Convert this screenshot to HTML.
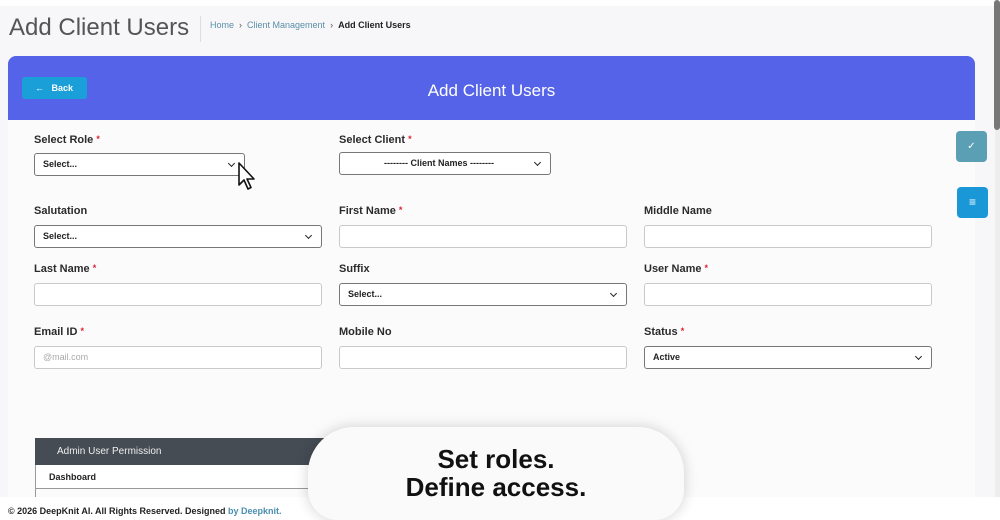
<!DOCTYPE html>
<html style="overflow:hidden;width:1000px;height:520px"><head><meta charset="utf-8">
<style>
*{box-sizing:border-box;margin:0;padding:0}
body{width:1000px;height:520px;overflow:hidden;background:#f7f7f9;font-family:"Liberation Sans",sans-serif;position:relative;color:#222}
.a{position:absolute}
.lbl{position:absolute;font-size:11px;font-weight:bold;color:#2b2b2b}
.lbl i{color:#d23;font-style:normal;font-size:9px;vertical-align:top}
.in{position:absolute;height:23px;border:1px solid #c9c9cc;border-radius:3px;background:#fff;font-size:9px;padding:0 8px;line-height:21px;color:#999}
.sel{border-color:#777;color:#222;font-weight:bold}
.sel:after{content:"";position:absolute;right:10px;top:7px;width:4px;height:4px;border-right:1.5px solid #222;border-bottom:1.5px solid #222;transform:rotate(45deg)}
</style></head><body>
<div class="a" style="left:0;top:0;width:1000px;height:6px;background:#fff"></div>
<div class="a" style="left:9px;top:14px;font-size:24px;color:#555">Add Client Users</div>
<div class="a" style="left:200px;top:16px;width:1px;height:26px;background:#ddd"></div>
<div class="a" style="left:210px;top:20px;font-size:9px;color:#5a8fa8">Home &nbsp;<span style="color:#555">›</span>&nbsp; Client Management &nbsp;<span style="color:#555">›</span>&nbsp; <b style="color:#222">Add Client Users</b></div>
<div class="a" style="left:8px;top:56px;width:967px;height:64px;background:#5463e8;border-radius:8px 8px 0 0"></div>
<div class="a" style="left:22px;top:77px;width:65px;height:22px;background:#1a9fd8;border-radius:3px;color:#fff;font-size:9px;font-weight:bold;line-height:22px;padding-left:13px">←&nbsp;&nbsp; Back</div>
<div class="a" style="left:0;width:983px;top:81px;text-align:center;color:#fff;font-size:17px">Add Client Users</div>
<div class="a" style="left:8px;top:120px;width:967px;height:380px;background:#fbfbfc"></div>

<div class="lbl" style="left:34px;top:134px">Select Role <i>*</i></div>
<div class="in sel" style="left:34px;top:153px;width:211px">Select...</div>
<div class="lbl" style="left:339px;top:134px">Select Client <i>*</i></div>
<div class="in sel" style="left:339px;top:152px;width:212px;text-align:center;padding-right:20px">-------- Client Names --------</div>
<svg class="a" style="left:237px;top:161px" width="22" height="32" viewBox="0 0 22 32"><path d="M2 2 L2 24 L7 19 L11 28 L14 26.5 L10 18 L17 18 Z" fill="#fff" stroke="#111" stroke-width="1.6" stroke-linejoin="round"/></svg>

<div class="lbl" style="left:34px;top:205px">Salutation</div>
<div class="in sel" style="left:34px;top:225px;width:288px">Select...</div>
<div class="lbl" style="left:339px;top:205px">First Name <i>*</i></div>
<div class="in" style="left:339px;top:225px;width:288px"></div>
<div class="lbl" style="left:644px;top:205px">Middle Name</div>
<div class="in" style="left:644px;top:225px;width:288px"></div>

<div class="lbl" style="left:34px;top:263px">Last Name <i>*</i></div>
<div class="in" style="left:34px;top:283px;width:288px"></div>
<div class="lbl" style="left:339px;top:263px">Suffix</div>
<div class="in sel" style="left:339px;top:283px;width:288px">Select...</div>
<div class="lbl" style="left:644px;top:263px">User Name <i>*</i></div>
<div class="in" style="left:644px;top:283px;width:288px"></div>

<div class="lbl" style="left:34px;top:326px">Email ID <i>*</i></div>
<div class="in" style="left:34px;top:346px;width:288px;color:#aaa">@mail.com</div>
<div class="lbl" style="left:339px;top:326px">Mobile No</div>
<div class="in" style="left:339px;top:346px;width:288px"></div>
<div class="lbl" style="left:644px;top:326px">Status <i>*</i></div>
<div class="in sel" style="left:644px;top:346px;width:288px">Active</div>

<div class="a" style="left:35px;top:438px;width:300px;height:27px;background:#454c54;color:#eee;font-size:10px;line-height:27px;padding-left:22px">Admin User Permission</div>
<div class="a" style="left:35px;top:465px;width:300px;height:24px;background:#fff;border-left:1px solid #999;border-bottom:1px solid #999;font-size:9px;font-weight:bold;line-height:24px;padding-left:13px">Dashboard</div>
<div class="a" style="left:35px;top:489px;width:1px;height:10px;background:#999"></div>

<div class="a" style="left:956px;top:131px;width:31px;height:31px;background:#5b9fb4;border-radius:4px;color:#fff;font-size:10px;text-align:center;line-height:31px">✓</div>
<div class="a" style="left:957px;top:187px;width:31px;height:31px;background:#1a97d6;border-radius:4px;color:#fff;font-size:12px;text-align:center;line-height:31px">≡</div>
<div class="a" style="left:994px;top:0;width:6px;height:130px;background:#777;border-radius:3px"></div>
<div class="a" style="left:995px;top:130px;width:5px;height:390px;background:#eee"></div>

<div class="a" style="left:0;top:497px;width:1000px;height:23px;background:#fff"></div>
<div class="a" style="left:8px;top:506px;font-size:9px;font-weight:bold;color:#222">© 2026 DeepKnit AI. All Rights Reserved. Designed <span style="color:#4a8fb0">by Deepknit.</span></div>

<div class="a" style="left:308px;top:427px;width:376px;height:93px;background:#fafafb;border-radius:46px 46px 30px 30px;box-shadow:0 0 14px rgba(0,0,0,.18);text-align:center;padding-top:18px;font-size:26px;font-weight:bold;line-height:28px;color:#111">Set roles.<br>Define access.</div>
</body></html>
